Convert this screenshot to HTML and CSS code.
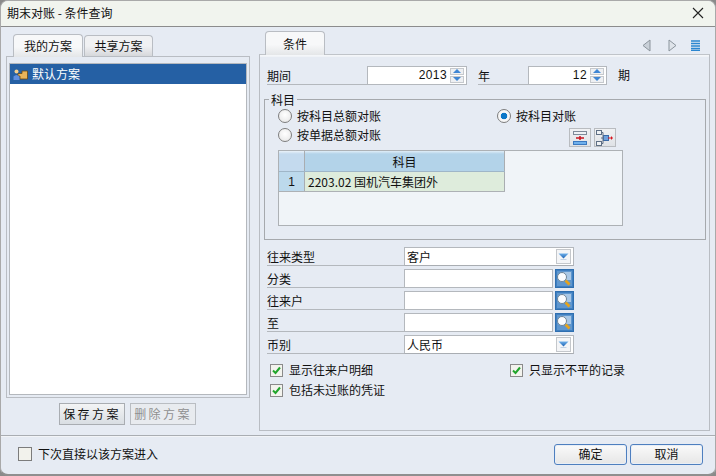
FILE: index.html
```html
<!DOCTYPE html>
<html lang="zh">
<head>
<meta charset="utf-8">
<title>期末对账 - 条件查询</title>
<link rel="stylesheet" href="styles.css">
</head>
<body>
<svg class="defs" width="0" height="0">
  <defs>
    <linearGradient id="g-arrow" x1="0" y1="0" x2="0" y2="1"><stop offset="0" stop-color="#6fb0ea"/><stop offset="1" stop-color="#1c62b4"/></linearGradient>
    <symbol id="i-search" viewBox="0 0 19 19">
      <rect x="0.500" y="0.500" width="18" height="18" fill="#3f7fc0" stroke="#2f6fb0"/>
      <rect x="2" y="2" width="15" height="15" fill="#5f97cf"/>
      <rect x="8" y="3" width="8" height="8" fill="#a9c8e6"/>
      <circle cx="7" cy="8" r="4.500" fill="#fafcfe" stroke="#6f8598"/>
      <path d="M10.500 11.500l4 4" stroke="#e5a31c" stroke-width="2.600"/>
    </symbol>
    <symbol id="i-down" viewBox="0 0 15 15">
      <rect x="0.500" y="0.500" width="14" height="14" fill="#f4f5f7" stroke="#c4c7cb"/>
      <path d="M2.500 4.500h10L7.500 9.500z" fill="url(#g-arrow)"/>
      <path d="M4.500 10.500h6" stroke="#c3d3e6"/>
    </symbol>
    <symbol id="i-check" viewBox="0 0 13 13">
      <rect x="0.500" y="0.500" width="12" height="12" fill="#f3f3ee" stroke="#8a8a8a"/>
      <path d="M3 6.500l2.500 2.500 4.500-5.500" fill="none" stroke="#22a52c" stroke-width="2"/>
    </symbol>
  </defs>
</svg>
<div class="window">
  <header class="titlebar">
    <span class="title">期末对账 - 条件查询</span>
    <svg class="close" width="12" height="12" viewBox="0 0 12 12"><path d="M1 1l10 10M11 1L1 11" stroke="#222" stroke-width="1.100"/></svg>
  </header>
  <div class="main">
    <section class="left">
      <div class="tabs left-tabs">
        <div class="tab active">我的方案</div>
        <div class="tab inactive">共享方案</div>
      </div>
      <div class="left-panel">
        <div class="list">
          <div class="list-row">
            <svg class="row-icon" width="15" height="14" viewBox="0 0 15 14">
              <path d="M5 6.500h4V4h5.500v8H7V9H5z" fill="#e8b45a" stroke="#6b4a12" stroke-width="0.800"/>
              <circle cx="3.500" cy="4.500" r="2" fill="#f2cf8f"/>
              <path d="M0.500 13V9.500Q3.500 6.500 6.500 9.500V13z" fill="#5f8fe0"/>
            </svg>
            <span>默认方案</span>
          </div>
        </div>
      </div>
      <div class="plan-buttons">
        <button class="plan-btn">保存方案</button>
        <button class="plan-btn disabled">删除方案</button>
      </div>
    </section>
    <section class="right">
      <div class="right-head">
        <div class="tab cond-tab">条件</div>
        <div class="nav-icons">
          <svg class="nav-first" width="9" height="13" viewBox="0 0 9 13"><path d="M8 1v11L1 6.500z" fill="#c9d0d8" stroke="#8b949c"/></svg>
          <svg width="9" height="13" viewBox="0 0 9 13"><path d="M1 1v11l7-5.500z" fill="#dfe4ea" stroke="#8b949c"/></svg>
          <svg width="9" height="11" viewBox="0 0 9 11"><path d="M0 1h9M0 3.500h9M0 6h9M0 8.500h9M0 10.500h9" stroke="#2a86d0" stroke-width="1.300"/></svg>
        </div>
      </div>
      <div class="right-panel">
        <div class="period-row">
          <span class="ul-label period-label">期间</span>
          <div class="spin w100">
            <span class="spin-value">2013</span>
            <span class="spin-btns"><i class="up"></i><i class="dn"></i></span>
          </div>
          <span class="ul-label year-label">年</span>
          <div class="spin w79">
            <span class="spin-value">12</span>
            <span class="spin-btns"><i class="up"></i><i class="dn"></i></span>
          </div>
          <span class="period-suffix">期</span>
        </div>

        <fieldset class="subject">
          <legend>科目</legend>
          <div class="radio-grid">
            <label class="radio"><i class="radio-dot"></i>按科目总额对账</label>
            <label class="radio"><i class="radio-dot on"></i>按科目对账</label>
            <label class="radio"><i class="radio-dot"></i>按单据总额对账</label>
            <div class="tool-btns">
              <span class="tool-btn">
                <svg width="16" height="16" viewBox="0 0 16 16">
                  <rect x="1.500" y="1.500" width="13" height="3" fill="#eef1f4" stroke="#7f8a98"/>
                  <rect x="1.500" y="11.500" width="13" height="3" fill="#6fb0ec" stroke="#3a78c0"/>
                  <path d="M4 8h8M8 6v4" stroke="#c8141e" stroke-width="1.500"/>
                </svg>
              </span>
              <span class="tool-btn">
                <svg width="18" height="16" viewBox="0 0 18 16">
                  <rect x="0.500" y="0.500" width="5" height="4" fill="#eef1f4" stroke="#5f6f85"/>
                  <rect x="0.500" y="11.500" width="5" height="4" fill="#eef1f4" stroke="#5f6f85"/>
                  <rect x="7.500" y="5.500" width="5" height="5" fill="#6fa0dc" stroke="#3a6aa8"/>
                  <path d="M5 2.500h2v11H5M5 8h2" fill="none" stroke="#5f6f85"/>
                  <path d="M12 8h5M15.500 6.500v3" stroke="#d8141e"/>
                </svg>
              </span>
            </div>
          </div>
          <div class="grid-box">
            <div class="grid-row grid-head">
              <div class="cell-num"></div>
              <div class="cell-main">科目</div>
            </div>
            <div class="grid-row grid-data">
              <div class="cell-num">1</div>
              <div class="cell-main">2203.02 国机汽车集团外</div>
            </div>
          </div>
        </fieldset>

        <div class="fields">
          <div class="field-row">
            <span class="ul-label">往来类型</span>
            <div class="select"><span>客户</span><svg class="select-arrow" width="15" height="15"><use href="#i-down"/></svg></div>
          </div>
          <div class="field-row">
            <span class="ul-label">分类</span>
            <div class="input-wrap"><div class="text-input"></div><svg width="19" height="19"><use href="#i-search"/></svg></div>
          </div>
          <div class="field-row">
            <span class="ul-label">往来户</span>
            <div class="input-wrap"><div class="text-input"></div><svg width="19" height="19"><use href="#i-search"/></svg></div>
          </div>
          <div class="field-row">
            <span class="ul-label">至</span>
            <div class="input-wrap"><div class="text-input"></div><svg width="19" height="19"><use href="#i-search"/></svg></div>
          </div>
          <div class="field-row">
            <span class="ul-label">币别</span>
            <div class="select"><span>人民币</span><svg class="select-arrow" width="15" height="15"><use href="#i-down"/></svg></div>
          </div>
        </div>

        <div class="checks">
          <label class="check"><svg width="13" height="13"><use href="#i-check"/></svg>显示往来户明细</label>
          <label class="check"><svg width="13" height="13"><use href="#i-check"/></svg>只显示不平的记录</label>
          <label class="check"><svg width="13" height="13"><use href="#i-check"/></svg>包括未过账的凭证</label>
        </div>
      </div>
    </section>
  </div>
  <footer class="footer">
    <label class="next-time"><span class="empty-check"></span>下次直接以该方案进入</label>
    <div class="footer-btns">
      <button class="dlg-btn">确定</button>
      <button class="dlg-btn">取消</button>
    </div>
  </footer>
</div>
</body>
</html>
```

FILE: styles.css
```css
* { box-sizing: border-box; }
html, body { margin: 0; padding: 0; }
body {
  width: 716px;
  height: 476px;
  background: #8a8a8a;
  font: 12px/16px "Noto Sans CJK SC", "Liberation Sans", sans-serif;
  color: #111;
  overflow: hidden;
}
.defs { display: block; height: 0; }
i { display: block; font-style: normal; }
label { display: flex; align-items: center; }

.window {
  width: 716px;
  height: 476px;
  display: flex;
  flex-direction: column;
  background: #e6ebf3;
  border: 1px solid #a9a9a9;
  border-bottom: 2px solid #8f8f8f;
  border-radius: 8px;
  overflow: hidden;
}

.titlebar {
  flex: none;
  height: 26px;
  padding: 0 11px 2px 6px;
  display: flex;
  justify-content: space-between;
  align-items: center;
  background: #f1f4ee;
  border-bottom: 1px solid #8c8c8c;
}
.title { font-size: 12px; }

.main { flex: none; height: 407px; display: flex; }

.left { flex: none; width: 258px; padding: 7px 0 0 5px; }
.tabs { display: flex; align-items: flex-end; }
.left-tabs { height: 22px; padding-left: 7px; gap: 1px; }
.tab {
  border: 1px solid #b9bdc3;
  border-bottom: 0;
  border-radius: 4px 4px 0 0;
  text-align: center;
  background: linear-gradient(#f7f8f9 0 55%, #e4e6e8);
}
.tab.active { width: 70px; height: 23px; line-height: 22px; position: relative; top: 1px; z-index: 1; }
.tab.inactive { width: 69px; height: 21px; line-height: 20px; background: linear-gradient(#f0f1f3 0 50%, #d6d8db); }
.left-panel { width: 244px; height: 342px; padding: 6px 2px 2px; border: 1px solid #b9bdc3; background: #e6ebf3; }
.list { height: 100%; background: #fff; border: 1px solid #b4b8bd; }
.list-row { height: 20px; display: flex; align-items: center; padding-left: 3px; gap: 4px; background: #2560a4; color: #fff; }
.plan-buttons { display: flex; gap: 5px; margin-top: 5px; padding-left: 53px; }
.plan-btn {
  width: 66px;
  height: 22px;
  padding: 0;
  font: inherit;
  letter-spacing: 2.400px;
  color: #111;
  border: 1px solid #a9adb2;
  background: linear-gradient(#f3f4f5, #d9dee3);
}
.plan-btn.disabled { color: #8f8f8f; background: #e8ebef; border-color: #b9bdc2; }

.right { flex: 1; padding: 4px 5px 0 0; display: flex; flex-direction: column; }
.right-head { height: 24px; display: flex; justify-content: space-between; padding: 0 10px 0 6px; }
.cond-tab { width: 60px; height: 24px; line-height: 24px; position: relative; z-index: 1; }
.nav-icons { display: flex; align-items: center; gap: 14px; padding-top: 5px; }
.nav-first { margin-right: 3px; }
.right-panel {
  width: 451px;
  height: 377px;
  margin-top: -1px;
  padding: 11px 3px 0 7px;
  border: 1px solid #b9bdc3;
  border-top-color: #c0c4c9;
  box-shadow: inset 0 1px 0 #f4f6f9, inset 0 2px 0 #f0f3f7;
}

.ul-label {
  display: block;
  border-bottom: 1px solid #b4b8bd;
  line-height: 17px;
  height: 19px;
  padding-top: 1px;
}
.period-row { display: flex; align-items: flex-start; height: 19px; }
.period-label { width: 100px; }
.year-label { width: 50px; margin-left: 11px; }
.period-suffix { margin-left: 11px; line-height: 18px; }
.spin {
  height: 19px;
  background: #fff;
  border: 1px solid #b4b8bd;
  display: flex;
  justify-content: flex-end;
  font-family: "Liberation Sans", sans-serif;
}
.w100 { width: 100px; }
.w79 { width: 79px; }
.spin-value { line-height: 17px; padding-right: 3px; letter-spacing: 0.400px; }
.spin-btns { width: 14px; margin: 1px 2px 0 0; display: flex; flex-direction: column; gap: 1px; }
.spin-btns i { height: 7px; flex: none; background: #eef0f3; border: 1px solid #c6c9cd; position: relative; }
.spin-btns i::after {
  content: "";
  position: absolute;
  left: 2px;
  width: 0;
  height: 0;
  border: 4px solid transparent;
  border-top-width: 0;
  border-bottom: 4px solid #3f86d4;
  top: 0;
}
.spin-btns i.dn::after { border-bottom: 0; border-top: 4px solid #3f86d4; }

.subject {
  width: 442px;
  height: 147px;
  margin: 8px 0 0 -3px;
  padding: 0 13px;
  border: 1px solid #a6a9ad;
  min-width: 0;
}
.subject legend { padding: 0 2px; margin-left: -9px; line-height: 13px; height: 13px; }
.radio-grid {
  display: grid;
  grid-template-columns: 219px 1fr;
  grid-template-rows: 19px 19px;
}
.radio { gap: 5px; height: 19px; }
.radio-dot {
  width: 14px;
  height: 14px;
  border-radius: 50%;
  border: 1px solid #7d7d7d;
  background: radial-gradient(circle at 50% 40%, #fff, #e4e4e4);
}
.radio-dot.on { background: radial-gradient(circle, #0d78c8 0 3px, #f7f7f7 3.600px); }
.tool-btns { display: flex; gap: 3px; padding: 3px 0 0 72px; }
.tool-btn {
  width: 22px;
  height: 19px;
  display: flex;
  align-items: center;
  justify-content: center;
  background: linear-gradient(#f0f1f3, #dfe2e6);
  border: 1px solid #b9bcc0;
}
.grid-box {
  width: 345px;
  height: 76px;
  margin-top: 6px;
  background: #f0f4f8;
  border: 1px solid #adb1b5;
}
.grid-row { display: flex; width: 226px; }
.cell-num { width: 26px; flex: none; border-right: 1px solid #a9adb1; }
.cell-main { flex: 1; border-right: 1px solid #a9adb1; }
.grid-head { height: 21px; border-bottom: 1px solid #9fb6c8; line-height: 21px; text-align: center; }
.grid-head .cell-num { background: linear-gradient(#eaf2f9, #c4daee 3px); }
.grid-head .cell-main { background: linear-gradient(#e0edf7, #b3d3e9 3px); }
.grid-data { height: 20px; line-height: 20px; border-bottom: 1px solid #adb1b5; }
.grid-data .cell-num { background: #bcd9ec; text-align: center; font-family: "Liberation Sans", sans-serif; }
.grid-data .cell-main { background: #deecdc; padding-left: 3px; }

.fields { display: flex; flex-direction: column; gap: 3px; margin-top: 7px; }
.field-row { display: flex; height: 19px; }
.field-row .ul-label { width: 137px; }
.select {
  width: 170px;
  height: 19px;
  padding: 0 2px;
  display: flex;
  justify-content: space-between;
  align-items: center;
  background: #fff;
  border: 1px solid #b4b8bd;
  border-bottom-color: #a9adb2;
}
.input-wrap { display: flex; width: 170px; justify-content: space-between; }
.text-input { width: 149px; height: 19px; background: #fff; border: 1px solid #b4b8bd; }

.checks {
  display: grid;
  grid-template-columns: 240px 1fr;
  grid-auto-rows: 20px;
  margin: 6px 0 0 3px;
}
.check { gap: 6px; height: 20px; }

.footer {
  flex: 1;
  margin-top: 1px;
  border-top: 1px solid #a9adb2;
  box-shadow: inset 0 1px 0 #f2f4f7;
  display: flex;
  justify-content: space-between;
  align-items: center;
  padding: 0 12px 2px 17px;
}
.next-time { gap: 6px; }
.empty-check {
  width: 14px;
  height: 14px;
  border: 1px solid #7c7c7c;
  background: #f2f2ec;
}
.footer-btns { display: flex; gap: 3px; }
.dlg-btn {
  width: 73px;
  height: 21px;
  padding: 0;
  font: inherit;
  color: #111;
  border: 1px solid #4e7fbf;
  border-radius: 3px;
  background: linear-gradient(#fafafa, #e6e6e6);
  box-shadow: inset 0 0 0 1px #e8eef6;
}
```
